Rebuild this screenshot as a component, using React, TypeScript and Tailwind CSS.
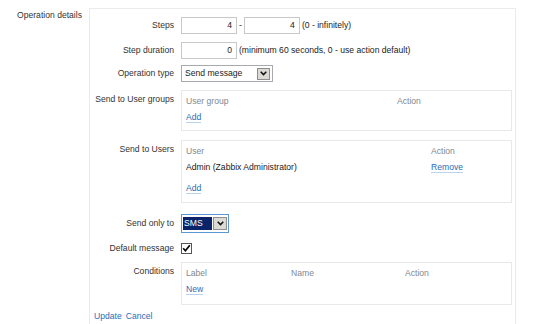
import React from "react";

function Chevron() {
  return (
    <svg width="7" height="5" viewBox="0 0 7 5">
      <path d="M0.7 0.7 L3.5 3.6 L6.3 0.7" stroke="#111" strokeWidth="1.5" fill="none" />
    </svg>
  );
}

function Link({ children, underline = true }: { children: React.ReactNode; underline?: boolean }) {
  return (
    <span className={underline ? "text-[#2c6cb6] border-b border-[#b9d2ee] leading-[10px]" : "text-[#2c6cb6]"}>
      {children}
    </span>
  );
}

function Field({ children }: { children: React.ReactNode }) {
  return (
    <div className="w-[56px] h-[17px] border border-[#c8c8c8] bg-white flex items-center justify-end pr-[4px]">
      {children}
    </div>
  );
}

export default function App() {
  return (
    <div className="w-[558px] h-[324px] overflow-hidden bg-white font-['Liberation_Sans',Arial,sans-serif] text-[8.6px] leading-[11px] text-[#222]">
      <div className="flex pt-[8px]">
        <div className="w-[89px] shrink-0 pr-[7px] pt-[2px] text-right text-[#333]">Operation details</div>
        <div className="w-[427px] h-[330px] border border-b-0 border-[#ebebeb] pr-[3px] flex flex-col">
          {/* Steps */}
          <div className="flex items-center mt-[8px] h-[17px]">
            <div className="w-[84px] shrink-0 text-right text-[#333]">Steps</div>
            <div className="ml-[7px] flex items-center">
              <Field>4</Field>
              <span className="mx-[2px]">-</span>
              <Field>4</Field>
              <span className="ml-[2px]">(0 - infinitely)</span>
            </div>
          </div>
          {/* Step duration */}
          <div className="flex items-center mt-[8px] h-[17px]">
            <div className="w-[84px] shrink-0 text-right text-[#333]">Step duration</div>
            <div className="ml-[7px] flex items-center">
              <Field>0</Field>
              <span className="ml-[2px]">(minimum 60 seconds, 0 - use action default)</span>
            </div>
          </div>
          {/* Operation type */}
          <div className="flex items-center mt-[6px] h-[17px]">
            <div className="w-[84px] shrink-0 text-right text-[#333]">Operation type</div>
            <div className="ml-[7px] w-[92px] h-[17px] border border-[#a7abb0] bg-white flex items-center justify-between pl-[3px] pr-[2px]">
              <span>Send message</span>
              <div className="w-[13px] h-[12px] bg-[#dcdad5] border border-[#8e8e8e] flex items-center justify-center">
                <Chevron />
              </div>
            </div>
          </div>
          {/* Send to User groups */}
          <div className="flex items-start mt-[8px]">
            <div className="w-[84px] shrink-0 text-right text-[#333] pt-[4px]">Send to User groups</div>
            <div className="ml-[7px] flex-1 h-[41px] border border-[#e8e8e8] pl-[4px] pt-[2px]">
              <div className="flex h-[16px] items-center text-[#7f8890]">
                <div className="w-[211px]">User group</div>
                <div>Action</div>
              </div>
              <div className="flex h-[16px] items-center">
                <Link>Add</Link>
              </div>
            </div>
          </div>
          {/* Send to Users */}
          <div className="flex items-start mt-[9px]">
            <div className="w-[84px] shrink-0 text-right text-[#333] pt-[4px]">Send to Users</div>
            <div className="ml-[7px] flex-1 h-[63px] border border-[#e8e8e8] pl-[4px] pt-[2px]">
              <div className="flex h-[16px] items-center text-[#7f8890]">
                <div className="w-[245px]">User</div>
                <div>Action</div>
              </div>
              <div className="flex h-[16px] items-center">
                <div className="w-[245px]">Admin (Zabbix Administrator)</div>
                <Link>Remove</Link>
              </div>
              <div className="flex h-[16px] items-center mt-[5px]">
                <Link>Add</Link>
              </div>
            </div>
          </div>
          {/* Send only to */}
          <div className="flex items-center mt-[11px] h-[19px]">
            <div className="w-[84px] shrink-0 text-right text-[#333]">Send only to</div>
            <div className="ml-[7px] w-[48px] h-[19px] border border-[#5b97d2] bg-white flex items-center p-[1px]">
              <div className="flex-1 h-[13px] bg-[#0a246a] text-white flex items-center pl-[1px] mr-[1px]">SMS</div>
              <div className="w-[14px] h-[13px] bg-[#dcdad5] border border-[#8e8e8e] flex items-center justify-center">
                <Chevron />
              </div>
            </div>
          </div>
          {/* Default message */}
          <div className="flex items-center mt-[10px] h-[11px]">
            <div className="w-[84px] shrink-0 text-right text-[#333]">Default message</div>
            <div className="ml-[7px] w-[11px] h-[11px] border border-[#555] bg-white flex items-center justify-center">
              <svg width="9" height="9" viewBox="0 0 9 9">
                <path d="M1.2 4.3 L3.4 6.7 L7.8 1.3" stroke="#000" strokeWidth="1.7" fill="none" />
              </svg>
            </div>
          </div>
          {/* Conditions */}
          <div className="flex items-start mt-[8px]">
            <div className="w-[84px] shrink-0 text-right text-[#333] pt-[4px]">Conditions</div>
            <div className="ml-[7px] flex-1 h-[43px] border border-[#e8e8e8] pl-[4px] pt-[2px]">
              <div className="flex h-[16px] items-center text-[#7f8890]">
                <div className="w-[105px]">Label</div>
                <div className="w-[114px]">Name</div>
                <div>Action</div>
              </div>
              <div className="flex h-[16px] items-center">
                <Link>New</Link>
              </div>
            </div>
          </div>
          {/* Update Cancel */}
          <div className="flex gap-[4px] mt-[6px] pl-[4px]">
            <Link underline={false}>Update</Link>
            <Link underline={false}>Cancel</Link>
          </div>
        </div>
      </div>
    </div>
  );
}
